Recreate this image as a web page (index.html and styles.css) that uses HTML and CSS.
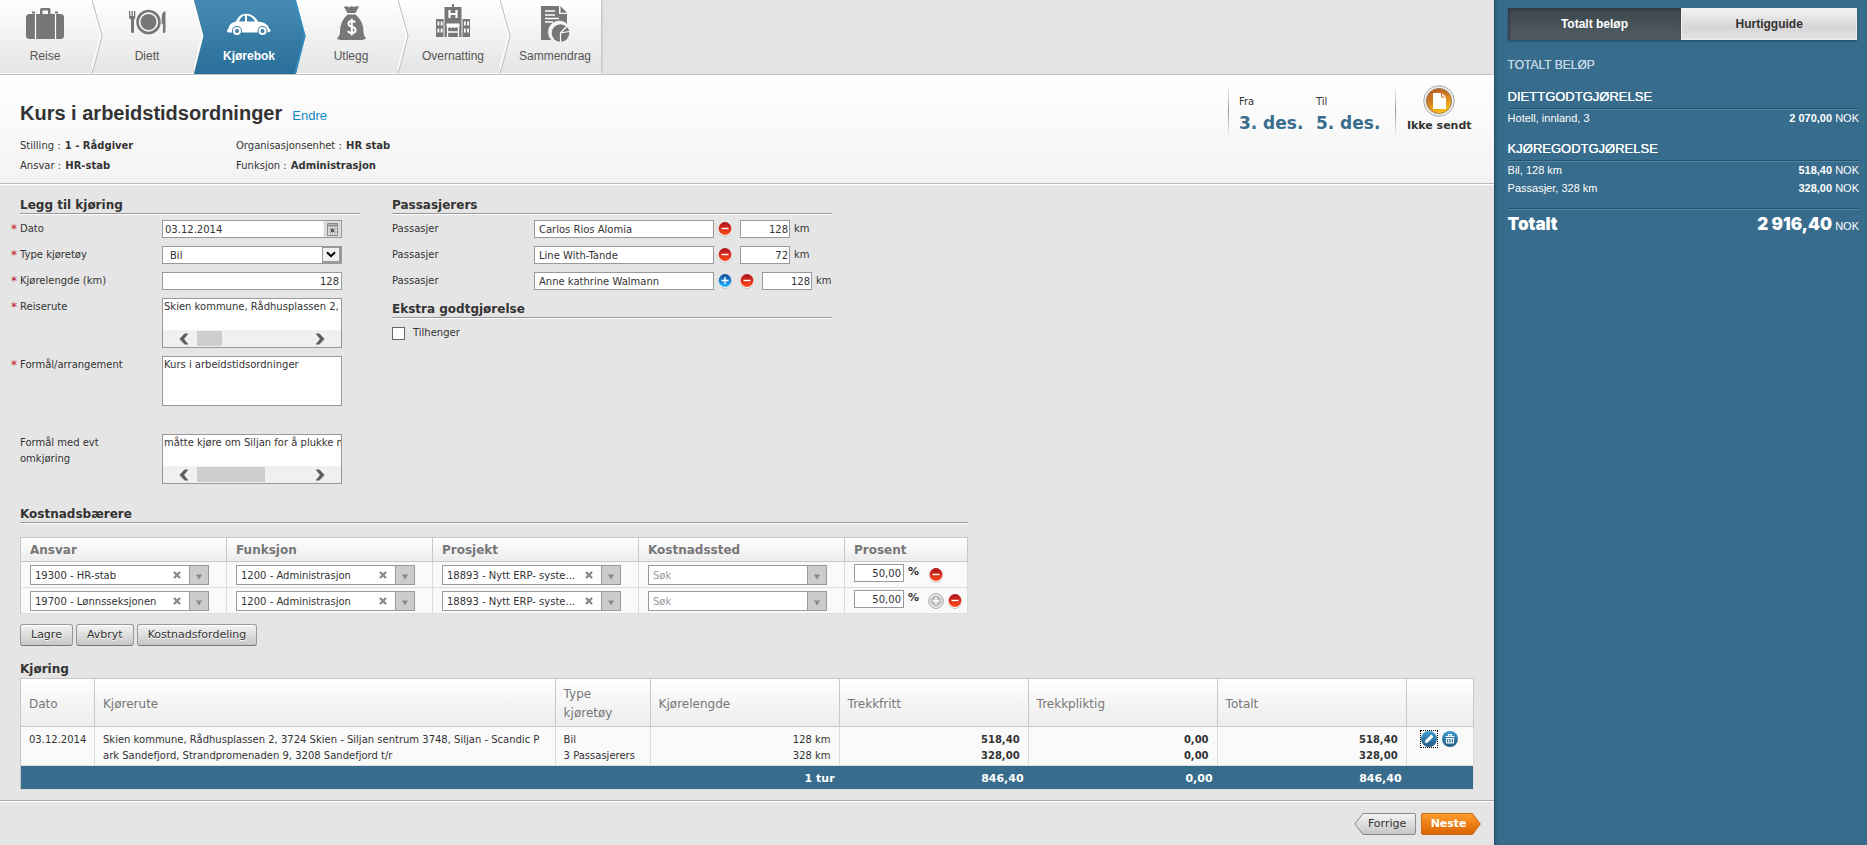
FILE: index.html
```html
<!DOCTYPE html>
<html lang="nb">
<head>
<meta charset="utf-8">
<title>Kjørebok - Kurs i arbeidstidsordninger</title>
<link rel="stylesheet" href="styles.css">
</head>
<body>
<svg class="defs" aria-hidden="true">
  <defs>
    <linearGradient id="g-red" x1="0" y1="0" x2="0" y2="1"><stop offset="0" stop-color="#a81418"/><stop offset=".45" stop-color="#d42a20"/><stop offset="1" stop-color="#ff4a14"/></linearGradient>
    <linearGradient id="g-blue" x1="0" y1="0" x2="0" y2="1"><stop offset="0" stop-color="#0f4f98"/><stop offset=".5" stop-color="#1c80d0"/><stop offset="1" stop-color="#22b4ff"/></linearGradient>
    <linearGradient id="g-tool" x1="0" y1="0" x2="0" y2="1"><stop offset="0" stop-color="#3f9bd0"/><stop offset="1" stop-color="#235a80"/></linearGradient>
    <linearGradient id="g-orange" x1="0" y1="0" x2=".4" y2="1"><stop offset="0" stop-color="#b5561e"/><stop offset=".5" stop-color="#cf7a22"/><stop offset="1" stop-color="#fdbb14"/></linearGradient>
    <linearGradient id="g-step" x1="0" y1="0" x2="0" y2="1"><stop offset="0" stop-color="#468bb3"/><stop offset="1" stop-color="#2a6f99"/></linearGradient>
    <linearGradient id="g-prev" x1="0" y1="0" x2="0" y2="1"><stop offset="0" stop-color="#f6f6f6"/><stop offset="1" stop-color="#c4c4c4"/></linearGradient>
    <linearGradient id="g-next" x1="0" y1="0" x2="0" y2="1"><stop offset="0" stop-color="#ff9e2e"/><stop offset="1" stop-color="#da6200"/></linearGradient>
    <symbol id="i-minus" viewBox="0 0 16 16"><circle cx="8" cy="8.500" r="7.200" fill="#aaa"/><circle cx="8" cy="8" r="7.100" fill="#fff"/><circle cx="8" cy="7.500" r="6.400" fill="url(#g-red)"/><path d="M4.500 7.500h7" stroke="#fff" stroke-width="1.400"/></symbol>
    <symbol id="i-plus" viewBox="0 0 16 16"><circle cx="8" cy="8.500" r="7.200" fill="#aaa"/><circle cx="8" cy="8" r="7.100" fill="#fff"/><circle cx="8" cy="7.500" r="6.400" fill="url(#g-blue)"/><path d="M4.500 7.500h7M8 4v7" stroke="#fff" stroke-width="1.400"/></symbol>
    <symbol id="i-plus-off" viewBox="0 0 16 16"><circle cx="8" cy="8" r="7.300" fill="#fff" stroke="#999"/><circle cx="8" cy="8" r="5.800" fill="#bdbdbd"/><path d="M4.500 8h7M8 4.500v7" stroke="#fff" stroke-width="1.400"/></symbol>
    <symbol id="i-chev" viewBox="0 0 12 74"><path d="M0 0L10 36L0 74" fill="none" stroke="#c2c2c2" stroke-width="1.200"/><path d="M-1.400 0L8.600 36L-1.400 74" fill="none" stroke="#fff" stroke-width="1.400"/></symbol>
    <symbol id="i-left" viewBox="0 0 10 12"><path d="M9.500 .5H5.500L.5 6L5.500 11.500H9.500L5 6z" fill="#606060"/></symbol>
    <symbol id="i-right" viewBox="0 0 10 12"><path d="M.5 .5H4.500L9.500 6L4.500 11.500H.5L5 6z" fill="#606060"/></symbol>
    <symbol id="i-x" viewBox="0 0 8 8"><path d="M1 1L7 7M7 1L1 7" stroke="#888" stroke-width="2.300"/></symbol>
    <symbol id="i-down" viewBox="0 0 6 6"><path d="M0 .5H6L3 5.500z" fill="#888"/></symbol>
  </defs>
</svg>

<div class="page">
  <div class="main">
    <nav class="steps">
      <ol>
        <li><a href="#reise">
          <svg class="step-icon" viewBox="0 0 44 40" fill="#777"><path d="M17 10V5.500Q17 4 18.500 4H26Q27.500 4 27.500 5.500V10H25V6.500H19.500V10zM9 9.500V7.500h3v2zM32 9.500V7.500h3v2z"/><rect x="3" y="10" width="38" height="25" rx="3.500"/><path d="M12.500 10v25M32.500 10v25" stroke="#fff" stroke-width="1.200"/></svg>
          <span>Reise</span></a><svg class="chev"><use href="#i-chev"/></svg></li>
        <li><a href="#diett">
          <svg class="step-icon" viewBox="0 0 44 40" fill="#777"><path d="M4 7h1.300v5h1.200V7h1.300v5H9V7h1.300v6.500Q10.300 15 9 15.600V28q0 1-1.400 1T6 28V15.600Q4 15 4 13.500z"/><circle cx="23.500" cy="18" r="11" fill="none" stroke="#777" stroke-width="2.600"/><circle cx="23.500" cy="18" r="8"/><path d="M40.500 7V28q0 1-1.300 1t-1.300-1V20h-1.200V13q0-5 3.800-6z"/></svg>
          <span>Diett</span></a><svg class="chev"><use href="#i-chev"/></svg></li>
        <li class="active"><svg class="step-bg" viewBox="0 0 112 74"><path d="M0 0H102L111.500 36L102 74H0L9.500 36z" fill="url(#g-step)"/><path d="M101 0L110.800 36L101 74" fill="none" stroke="#3290c8" stroke-width="1.500"/></svg><a href="#kjorebok" aria-current="step">
          <svg class="step-icon" viewBox="0 0 44 40" fill="#fff"><path fill-rule="evenodd" d="M0 27Q0 25 1.500 24.500Q2 19 9 17.500Q12 9.700 19 9.700Q27 9.700 31 17.500Q40 18 42 24.500Q43.700 25 43.700 27.500L40 28.500A5 5 0 0 0 30.500 28.500H14.500A5 5 0 0 0 5.500 28.500Q0 29 0 27zM12 17.500H18V11.500Q14 12 12 17.500zM20 11.500V17.500H28Q25 12 20 11.500z"/><circle cx="10" cy="27" r="5" fill="#3a7ea8"/><circle cx="35.500" cy="27" r="5" fill="#3a7ea8"/><circle cx="10" cy="27" r="3" fill="none" stroke="#fff" stroke-width="2"/><circle cx="35.500" cy="27" r="3" fill="none" stroke="#fff" stroke-width="2"/></svg>
          <span>Kjørebok</span></a></li>
        <li><a href="#utlegg">
          <svg class="step-icon" viewBox="0 0 44 40" fill="#777"><path d="M15 3Q18 1.500 20 3.500Q22 1.500 25 3Q27 2 30 2.500L26.500 9H18.500z"/><path d="M18.500 10.500H26.500Q34.500 17 34.500 28Q34.500 32 37 34Q36 36 31 36H14Q8.500 36 8 34Q11 32 11 28Q11 17 18.500 10.500z"/><path d="M26.200 18.500Q25.300 17 22.800 17Q19.500 17 19.500 19.800Q19.500 22 22.800 22.800Q26.600 23.600 26.600 26.300Q26.600 29 22.800 29Q19.800 29 18.800 27M22.800 14.800V31.500" fill="none" stroke="#fff" stroke-width="2"/></svg>
          <span>Utlegg</span></a><svg class="chev"><use href="#i-chev"/></svg></li>
        <li><a href="#overnatting">
          <svg class="step-icon" viewBox="0 0 44 40" fill="#777"><path d="M21 0h2v3h7.500v30H13.500V3H21zM5 15h7.500v18H5zM31.500 15H39v18h-7.500z"/><path d="M18.500 6v8M25.500 6v8M18.500 10h7" stroke="#fff" stroke-width="2.200"/><path d="M6.500 17.500h1.800v4H6.500zM9.700 17.500h1.800v4H9.700zM6.500 24.500h1.800v4H6.500zM9.700 24.500h1.800v4H9.700zM33 17.500h1.800v4H33zM36.200 17.500H38v4h-1.800zM33 24.500h1.800v4H33zM36.200 24.500H38v4h-1.800zM15.500 19.500h13V23q-1.600 2-3.200 0q-1.600 2-3.300 0q-1.600 2-3.300 0q-1.600 2-3.200 0z" fill="#fff"/><path d="M16.500 24v9M27.500 24v9M16.500 28h11" stroke="#fff" stroke-width="1.300" fill="none"/></svg>
          <span>Overnatting</span></a><svg class="chev"><use href="#i-chev"/></svg></li>
        <li><a href="#sammendrag">
          <svg class="step-icon" viewBox="0 0 44 40" fill="#777"><path d="M8 2H26V10H34V20A10.500 10.500 0 0 0 18.500 36H8zM27.500 2L34 8.700H27.500z"/><path d="M12 7h10M12 11h10M12 14.500h14M12 18h8" stroke="#fff" stroke-width="1.400"/><circle cx="27.500" cy="29" r="8.800"/><path d="M27.500 38V29L33.500 22.500M27.500 29L36.300 27.500" stroke="#fff" stroke-width="1.200" fill="none"/></svg>
          <span>Sammendrag</span></a></li>
      </ol>
    </nav>

    <header class="trip">
      <div class="trip-info">
        <div class="trip-title"><h1>Kurs i arbeidstidsordninger</h1><a href="#endre">Endre</a></div>
        <div class="facts">
          <div>Stilling : <b>1 - Rådgiver</b></div><div>Organisasjonsenhet : <b>HR stab</b></div>
          <div>Ansvar : <b>HR-stab</b></div><div>Funksjon : <b>Administrasjon</b></div>
        </div>
      </div>
      <div class="dates">
        <div><span>Fra</span><strong>3. des.</strong></div>
        <div><span>Til</span><strong>5. des.</strong></div>
      </div>
      <div class="status">
        <svg width="32" height="32" viewBox="0 0 32 32"><circle cx="16" cy="16" r="15.300" fill="#eee" stroke="#aaa"/><circle cx="16" cy="16" r="12.600" fill="url(#g-orange)" stroke="#8d7460" stroke-width=".8"/><path d="M10 8h8v4.500h5V24H10z" fill="#fff"/><path d="M19 8l4.200 3.800H19z" fill="#f7e6d2"/></svg>
        <strong>Ikke sendt</strong>
      </div>
    </header>

    <form class="content">
      <div class="columns">
        <section class="col-left">
          <h2>Legg til kjøring</h2>
          <div class="fields">
            <label class="req" for="dato">Dato</label>
            <div class="box with-btn"><input id="dato" value="03.12.2014"><button type="button" class="cal" aria-label="Velg dato"><svg width="11" height="13" viewBox="0 0 11 13"><path d="M.5 .5h10v12H.5z" fill="#e8e8e8" stroke="#888"/><path d="M1 2.500h9" stroke="#888" stroke-width="2"/><path d="M1 6h9M1 9h9M3.500 4v8M5.500 4v8M8 4v8" stroke="#aaa"/><path d="M4 6h3v3H4z" fill="#555"/></svg></button></div>
            <label class="req" for="type">Type kjøretøy</label>
            <div class="box with-btn"><select id="type"><option>Bil</option></select><span class="sel-arrow"><svg width="10" height="7" viewBox="0 0 10 7"><path d="M1 1.200L5 5.200L9 1.200" fill="none" stroke="#000" stroke-width="2"/></svg></span></div>
            <label class="req" for="lengde">Kjørelengde (km)</label>
            <div class="box"><input id="lengde" class="num" value="128"></div>
            <label class="req" for="rute">Reiserute</label>
            <div class="box area"><textarea id="rute" wrap="off">Skien kommune, Rådhusplassen 2, 3724 Skien - Siljan</textarea><div class="hscroll"><svg><use href="#i-left"/></svg><div class="track"><i class="thumb"></i></div><svg><use href="#i-right"/></svg></div></div>
            <label class="req" for="formal">Formål/arrangement</label>
            <div class="box area"><textarea id="formal">Kurs i arbeidstidsordninger</textarea></div>
            <label class="detour" for="omkj">Formål med evt omkjøring</label>
            <div class="box area detour"><textarea id="omkj" wrap="off">måtte kjøre om Siljan for å plukke med passasjer</textarea><div class="hscroll"><svg><use href="#i-left"/></svg><div class="track"><i class="thumb wide"></i></div><svg><use href="#i-right"/></svg></div></div>
          </div>
        </section>

        <section class="col-right">
          <h2>Passasjerers</h2>
          <div class="fields">
            <label for="p1">Passasjer</label>
            <div class="pass"><input id="p1" class="name" value="Carlos Rios Alomia"><button type="button" class="round" aria-label="Fjern"><svg><use href="#i-minus"/></svg></button><input class="km num" aria-label="Kilometer" value="128"><span>km</span></div>
            <label for="p2">Passasjer</label>
            <div class="pass"><input id="p2" class="name" value="Line With-Tande"><button type="button" class="round" aria-label="Fjern"><svg><use href="#i-minus"/></svg></button><input class="km num" aria-label="Kilometer" value="72"><span>km</span></div>
            <label for="p3">Passasjer</label>
            <div class="pass"><input id="p3" class="name" value="Anne kathrine Walmann"><button type="button" class="round" aria-label="Legg til"><svg><use href="#i-plus"/></svg></button><button type="button" class="round" aria-label="Fjern"><svg><use href="#i-minus"/></svg></button><input class="km num" aria-label="Kilometer" value="128"><span>km</span></div>
          </div>
          <h2 class="extra">Ekstra godtgjørelse</h2>
          <label class="check"><input type="checkbox">Tilhenger</label>
        </section>
      </div>

      <section class="cost">
        <h2>Kostnadsbærere</h2>
        <table class="grid cost-table">
          <thead><tr><th>Ansvar</th><th>Funksjon</th><th>Prosjekt</th><th>Kostnadssted</th><th class="pct-col">Prosent</th></tr></thead>
          <tbody>
            <tr>
              <td><div class="combo"><input aria-label="Ansvar" value="19300 - HR-stab"><button type="button" class="clear" aria-label="Tøm"><svg><use href="#i-x"/></svg></button><button type="button" class="open" aria-label="Åpne"><svg><use href="#i-down"/></svg></button></div></td>
              <td><div class="combo"><input aria-label="Funksjon" value="1200 - Administrasjon"><button type="button" class="clear" aria-label="Tøm"><svg><use href="#i-x"/></svg></button><button type="button" class="open" aria-label="Åpne"><svg><use href="#i-down"/></svg></button></div></td>
              <td><div class="combo"><input aria-label="Prosjekt" value="18893 - Nytt ERP- syste..."><button type="button" class="clear" aria-label="Tøm"><svg><use href="#i-x"/></svg></button><button type="button" class="open" aria-label="Åpne"><svg><use href="#i-down"/></svg></button></div></td>
              <td><div class="combo"><input aria-label="Kostnadssted" placeholder="Søk"><button type="button" class="open" aria-label="Åpne"><svg><use href="#i-down"/></svg></button></div></td>
              <td><div class="pct"><input class="num" aria-label="Prosent" value="50,00"><b>%</b><button type="button" class="round" aria-label="Fjern"><svg><use href="#i-minus"/></svg></button></div></td>
            </tr>
            <tr>
              <td><div class="combo"><input aria-label="Ansvar" value="19700 - Lønnsseksjonen"><button type="button" class="clear" aria-label="Tøm"><svg><use href="#i-x"/></svg></button><button type="button" class="open" aria-label="Åpne"><svg><use href="#i-down"/></svg></button></div></td>
              <td><div class="combo"><input aria-label="Funksjon" value="1200 - Administrasjon"><button type="button" class="clear" aria-label="Tøm"><svg><use href="#i-x"/></svg></button><button type="button" class="open" aria-label="Åpne"><svg><use href="#i-down"/></svg></button></div></td>
              <td><div class="combo"><input aria-label="Prosjekt" value="18893 - Nytt ERP- syste..."><button type="button" class="clear" aria-label="Tøm"><svg><use href="#i-x"/></svg></button><button type="button" class="open" aria-label="Åpne"><svg><use href="#i-down"/></svg></button></div></td>
              <td><div class="combo"><input aria-label="Kostnadssted" placeholder="Søk"><button type="button" class="open" aria-label="Åpne"><svg><use href="#i-down"/></svg></button></div></td>
              <td><div class="pct"><input class="num" aria-label="Prosent" value="50,00"><b>%</b><button type="button" class="round" aria-label="Legg til"><svg><use href="#i-plus-off"/></svg></button><button type="button" class="round" aria-label="Fjern"><svg><use href="#i-minus"/></svg></button></div></td>
            </tr>
          </tbody>
        </table>
      </section>

      <div class="actions"><button type="submit" class="btn">Lagre</button><button type="button" class="btn">Avbryt</button><button type="button" class="btn">Kostnadsfordeling</button></div>

      <section class="drives">
        <h3>Kjøring</h3>
        <table class="grid drive-table">
          <colgroup><col class="c-date"><col><col class="c-type"><col class="c-sum"><col class="c-sum"><col class="c-sum"><col class="c-sum"><col class="c-tools"></colgroup>
          <thead><tr><th>Dato</th><th>Kjørerute</th><th>Type kjøretøy</th><th>Kjørelengde</th><th>Trekkfritt</th><th>Trekkpliktig</th><th>Totalt</th><th></th></tr></thead>
          <tbody><tr>
            <td>03.12.2014</td>
            <td class="route">Skien kommune, Rådhusplassen 2, 3724 Skien - Siljan sentrum 3748, Siljan - Scandic Park Sandefjord, Strandpromenaden 9, 3208 Sandefjord t/r</td>
            <td>Bil<br>3 Passasjerers</td>
            <td class="sum">128 km<br>328 km</td>
            <td class="sum"><b>518,40<br>328,00</b></td>
            <td class="sum"><b>0,00<br>0,00</b></td>
            <td class="sum"><b>518,40<br>328,00</b></td>
            <td><div class="tools">
              <button type="button" class="tool focused" aria-label="Rediger"><svg viewBox="0 0 16 16"><circle cx="8" cy="8" r="8" fill="url(#g-tool)"/><path d="M3.800 12.200L4.600 9.300L10.300 3.600L12.400 5.700L6.700 11.400z" fill="#fff"/></svg></button>
              <button type="button" class="tool" aria-label="Slett"><svg viewBox="0 0 16 16"><circle cx="8" cy="8" r="8" fill="url(#g-tool)"/><path d="M3.500 5.500h9M6.500 5V3.700h3V5" fill="none" stroke="#fff" stroke-width="1.200"/><path d="M4.500 7.500h7v4.500h-7zM6.800 7.500v4.500M9.200 7.500v4.500" fill="none" stroke="#fff" stroke-width="1.100"/></svg></button>
            </div></td>
          </tr></tbody>
          <tfoot><tr><td></td><td></td><td></td><td>1 tur</td><td>846,40</td><td>0,00</td><td>846,40</td><td></td></tr></tfoot>
        </table>
      </section>
    </form>

    <footer class="pager">
      <button type="button" class="arrow prev"><svg viewBox="0 0 62 22"><path d="M9 .5H60Q61.500 .5 61.500 2V20Q61.500 21.500 60 21.500H9L.8 11z" fill="url(#g-prev)" stroke="#8a8a8a"/></svg><span>Forrige</span></button>
      <button type="button" class="arrow next"><svg viewBox="0 0 60 22"><path d="M2 .5H51.500L59.300 11L51.500 21.500H2Q.5 21.500 .5 20V2Q.5 .5 2 .5z" fill="url(#g-next)" stroke="#c96a14"/></svg><span>Neste</span></button>
    </footer>
  </div>

  <aside class="side">
    <div class="tabs"><button type="button" class="on">Totalt beløp</button><button type="button">Hurtigguide</button></div>
    <p class="side-title">TOTALT BELØP</p>
    <h4>DIETTGODTGJØRELSE</h4>
    <div class="line"><span>Hotell, innland, 3</span><span><b>2 070,00</b> NOK</span></div>
    <h4>KJØREGODTGJØRELSE</h4>
    <div class="line"><span>Bil, 128 km</span><span><b>518,40</b> NOK</span></div>
    <div class="line"><span>Passasjer, 328 km</span><span><b>328,00</b> NOK</span></div>
    <div class="total"><strong>Totalt</strong><span><strong>2 916,40</strong> NOK</span></div>
  </aside>
</div>
</body>
</html>
```
FILE: styles.css
```css
* { box-sizing: border-box; }
body {
  margin: 0;
  background: #e5e5e5;
  color: #333;
  font: 10px/16px Verdana, "DejaVu Sans", sans-serif;
}
h1, h2, h3, h4, p, ol { margin: 0; padding: 0; }
input, select, textarea, button { font: inherit; color: inherit; margin: 0; border-radius: 0; min-width: 0; }
button { padding: 0; border: 0; background: none; cursor: pointer; }
svg { display: block; }
.defs { position: absolute; width: 0; height: 0; }

.page { display: grid; grid-template-columns: minmax(0, 4fr) minmax(0, 1fr); min-height: 100vh; }

/* Step navigation */
.steps { background: #e3e3e3; border-bottom: 1px solid #c4c4c4; }
.steps ol {
  display: flex;
  width: 601px;
  height: 74px;
  list-style: none;
  background: linear-gradient(#fff, #e4e4e4);
  box-shadow: inset 0 -1px #fff, 1px 0 2px #bbb;
}
.steps li { position: relative; flex: 0 0 102px; }
.steps li:first-child { flex-basis: 92px; }
.steps a {
  position: relative;
  display: flex;
  flex-direction: column;
  align-items: center;
  gap: 4px;
  padding: 4px 0 0 8px;
  color: #555;
  font: 12px/16px "Liberation Sans", Arial, sans-serif;
  text-decoration: none;
}
.steps li:first-child a { padding: 4px 2px 0 0; }
.steps .active a { color: #fff; font-weight: bold; }
.step-icon { width: 44px; height: 40px; }
.chev { position: absolute; left: 100%; top: 0; width: 12px; height: 74px; }
.step-bg { position: absolute; left: 0; top: 0; width: 112px; height: 74px; z-index: 1; }
.steps .active a { z-index: 2; }

/* Trip header */
.trip {
  display: flex;
  align-items: flex-start;
  padding: 10px 22px 7px 20px;
  background: linear-gradient(#fff, #f3f3f3);
  border-bottom: 1px solid #bbb;
  box-shadow: 0 1px #fff, 0 2px #eee;
}
.trip-info { flex: 1; padding-top: 16px; }
.trip-title { display: flex; align-items: baseline; gap: 10px; font-family: "Liberation Sans", Arial, sans-serif; }
.trip-title h1 { font-size: 20px; line-height: 24px; }
.trip-title a { color: #1185c9; font-size: 13px; text-decoration: none; }
.facts { display: grid; grid-template-columns: 216px auto; justify-content: start; line-height: 20px; margin-top: 11px; }
.facts b { margin-left: 1px; }
.dates { display: flex; gap: 11px; padding: 9px 13px 0 11px; }
.dates, .status {
  min-height: 52px;
  background: linear-gradient(transparent, #999, transparent) 0 0 / 1px 52px no-repeat;
}
.dates div { display: flex; flex-direction: column; }
.dates strong { color: #386c8c; font-size: 17px; line-height: 24px; margin-top: 1px; min-width: 66px; }
.status { display: flex; flex-direction: column; align-items: center; padding-left: 12px; gap: 1px; }
.status strong { font-size: 11px; }

/* Form */
.content { padding: 13px 20px 0; }
h2, h3 { font-size: 12px; line-height: 16px; }
h2 { border-bottom: 1px solid #999; box-shadow: 0 1px #fff; }
.columns { display: flex; gap: 32px; }
.col-left { flex: 0 0 340px; }
.col-right { flex: 0 0 440px; }
.fields { display: grid; grid-template-columns: 118px auto; column-gap: 24px; row-gap: 8px; justify-content: start; align-items: start; margin-top: 6px; }
.fields label { padding-top: 1px; }
.req { position: relative; }
.req::before { content: "*"; position: absolute; left: -9px; color: #c8102e; font-size: 12px; }
.box { width: 180px; height: 18px; background: #fff; border: 1px solid #999; }
.box input, .box select, .box textarea { display: block; width: 100%; height: 16px; border: 0; padding: 1px 2px 0; background: none; outline: 0; }
.num { text-align: right; }
.with-btn { display: flex; }
.with-btn input, .with-btn select { flex: 1; }
.box select { appearance: none; padding-left: 7px; }
.cal { width: 18px; display: grid; place-items: center; background: #dcdcdc; border-left: 1px solid #eee; }
.sel-arrow { width: 19px; display: grid; place-items: center; background: #f0f0f0; border: 1px solid #999; border-width: 1px 2px 2px 1px; pointer-events: none; }
.area { height: 50px; display: flex; flex-direction: column; }
.box textarea { flex: 1; padding: 0 0 0 1px; resize: none; overflow: hidden; }
.hscroll { flex: 0 0 17px; display: flex; align-items: center; padding: 0 16px; background: #f0f0f0; }
.hscroll svg { width: 10px; height: 12px; }
.track { flex: 1; padding: 0 8px; }
.thumb { display: block; width: 25px; height: 15px; background: #cdcdcd; }
.thumb.wide { width: 68px; }
.detour { margin-top: 20px; }
.pass { display: flex; align-items: center; height: 18px; }
.pass input { height: 18px; border: 1px solid #999; background: #fff; padding: 1px 1px 0; }
.pass .name { width: 180px; padding-left: 4px; }
.pass .km { width: 50px; margin: 0 4px 0 7px; }
.round { width: 16px; height: 16px; margin-left: 3px; }
.round + .round { margin-left: 6px; }
.round svg { width: 16px; height: 16px; }
.extra { margin-top: 11px; }
.check { display: inline-flex; align-items: center; gap: 8px; margin-top: 7px; }
.check input { appearance: none; width: 13px; height: 13px; background: #fff; border: 1px solid #666; }

/* Tables */
.grid { width: 100%; table-layout: fixed; border-spacing: 0; border: solid #c8c8c8; border-width: 1px 0 0 1px; }
.grid th { text-align: left; color: #777; background: linear-gradient(#fff, #ececec); border: solid #c8c8c8; border-width: 0 1px 1px 0; padding: 0 8px; font-size: 12px; }
.grid td { background: #fafafa; border: solid #ddd; border-width: 0 1px 1px 0; padding: 0 8px; }
.cost { max-width: 948px; margin-top: 22px; }
.cost-table { margin-top: 14px; }
.cost-table th { height: 24px; padding: 0 9px; }
.cost-table td { height: 26px; padding: 1px 0 0 9px; }
.pct-col { width: 123px; }
.combo { display: flex; align-items: center; width: 179px; height: 20px; background: #fff; border: 1px solid #999; }
.combo input { flex: 1; height: 18px; border: 0; padding: 0 4px; background: none; outline: 0; }
.combo input::placeholder { color: #999; opacity: 1; }
.clear { width: 8px; height: 8px; margin-right: 8px; }
.clear svg { width: 8px; height: 8px; }
.open { display: grid; place-items: center; width: 19px; height: 18px; padding-top: 4px; background: #ccc; border-left: 1px solid #999; }
.open svg { width: 6px; height: 6px; }
.pct { display: flex; align-items: center; height: 22px; }
.pct input { width: 50px; height: 18px; border: 1px solid #999; background: #fff; padding: 0 2px; align-self: flex-start; }
.pct b { width: 17px; margin-left: 4px; align-self: flex-start; font-size: 11px; }
.pct .round + .round { margin-left: 3px; }

.actions { display: flex; gap: 3px; margin-top: 10px; }
.btn {
  height: 22px;
  padding: 0 10px;
  font-size: 11px;
  border: 1px solid #999;
  border-bottom-color: #777;
  border-radius: 3px;
  background: linear-gradient(#f4f4f4, #c6c6c6);
  box-shadow: inset 0 1px #fff;
  text-shadow: 0 1px #fff;
}
.drives { margin-top: 15px; }
.drives h3 { padding-bottom: 1px; }
.drive-table th { height: 48px; padding-top: 3px; font-weight: normal; line-height: 19px; }
.drive-table td { height: 39px; vertical-align: top; padding-top: 5px; padding-bottom: 1px; white-space: nowrap; }
.drive-table .route { white-space: normal; word-break: break-all; padding-right: 12px; }
.sum { text-align: right; }
.c-date { width: 74px; }
.c-type { width: 95px; }
.c-sum { width: 189px; }
.c-tools { width: 67px; }
.tools { display: flex; gap: 3px; justify-content: center; }
.tool { width: 18px; height: 18px; padding: 1px; margin-top: -2px; }
.tool svg { width: 16px; height: 16px; }
.focused { outline: 1px dotted #000; outline-offset: -1px; }
.drive-table tfoot td { height: 24px; padding: 5px 5px 2px; background: #386c8c; color: #fff; font-size: 11px; font-weight: bold; text-align: right; border-right-width: 0; }
.drive-table tfoot td:last-child { border-right-width: 1px; }

.pager { display: flex; justify-content: flex-end; gap: 5px; margin-top: 10px; padding: 12px 13px 9px; border-top: 1px solid #aaa; box-shadow: inset 0 1px #fff; }
.arrow { position: relative; height: 22px; font-size: 11px; }
.arrow svg { position: absolute; inset: 0; width: 100%; height: 100%; }
.arrow span { position: relative; }
.prev { width: 62px; padding-left: 5px; }
.next { width: 60px; padding-right: 4px; color: #fff; font-weight: bold; }

/* Summary sidebar */
.side {
  padding: 8px 8px 0 14px;
  background: #386c8c;
  color: #fff;
  box-shadow: inset 1px 0 #234e68, inset 4px 0 4px -2px #2a5873;
  font: 11px/16px "Liberation Sans", Arial, sans-serif;
}
.tabs { display: flex; height: 32px; margin-right: 2px; box-shadow: 0 1px 2px #244b62; }
.tabs button { flex: 1; color: #333; font-size: 12px; font-weight: bold; background: linear-gradient(#f2f2f2, #d6d6d6 60%, #e4e4e4); border: 1px solid #eee; }
.tabs .on { color: #fff; background: linear-gradient(#3c464c, #515d64); border: 0; box-shadow: inset 1px 1px 3px #2a3338; }
.side-title { margin: 17px 0 16px; color: #c5d8e3; font-size: 12px; text-shadow: 0 0 #c5d8e3; }
.side h4 { margin: 14px 0 0; padding-bottom: 3px; font-size: 13px; font-weight: normal; text-shadow: 0 0 #fff; border-bottom: 1px solid #28536d; box-shadow: 0 1px #4d84a5; }
.line { display: flex; justify-content: space-between; line-height: 18px; }
.total { display: flex; justify-content: space-between; align-items: baseline; margin-top: 11px; padding-top: 5px; border-top: 1px solid #28536d; box-shadow: inset 0 1px #4d84a5; line-height: 20px; }
.total strong { font: 900 17px/20px Inter, "Arial Black", sans-serif; }
```
